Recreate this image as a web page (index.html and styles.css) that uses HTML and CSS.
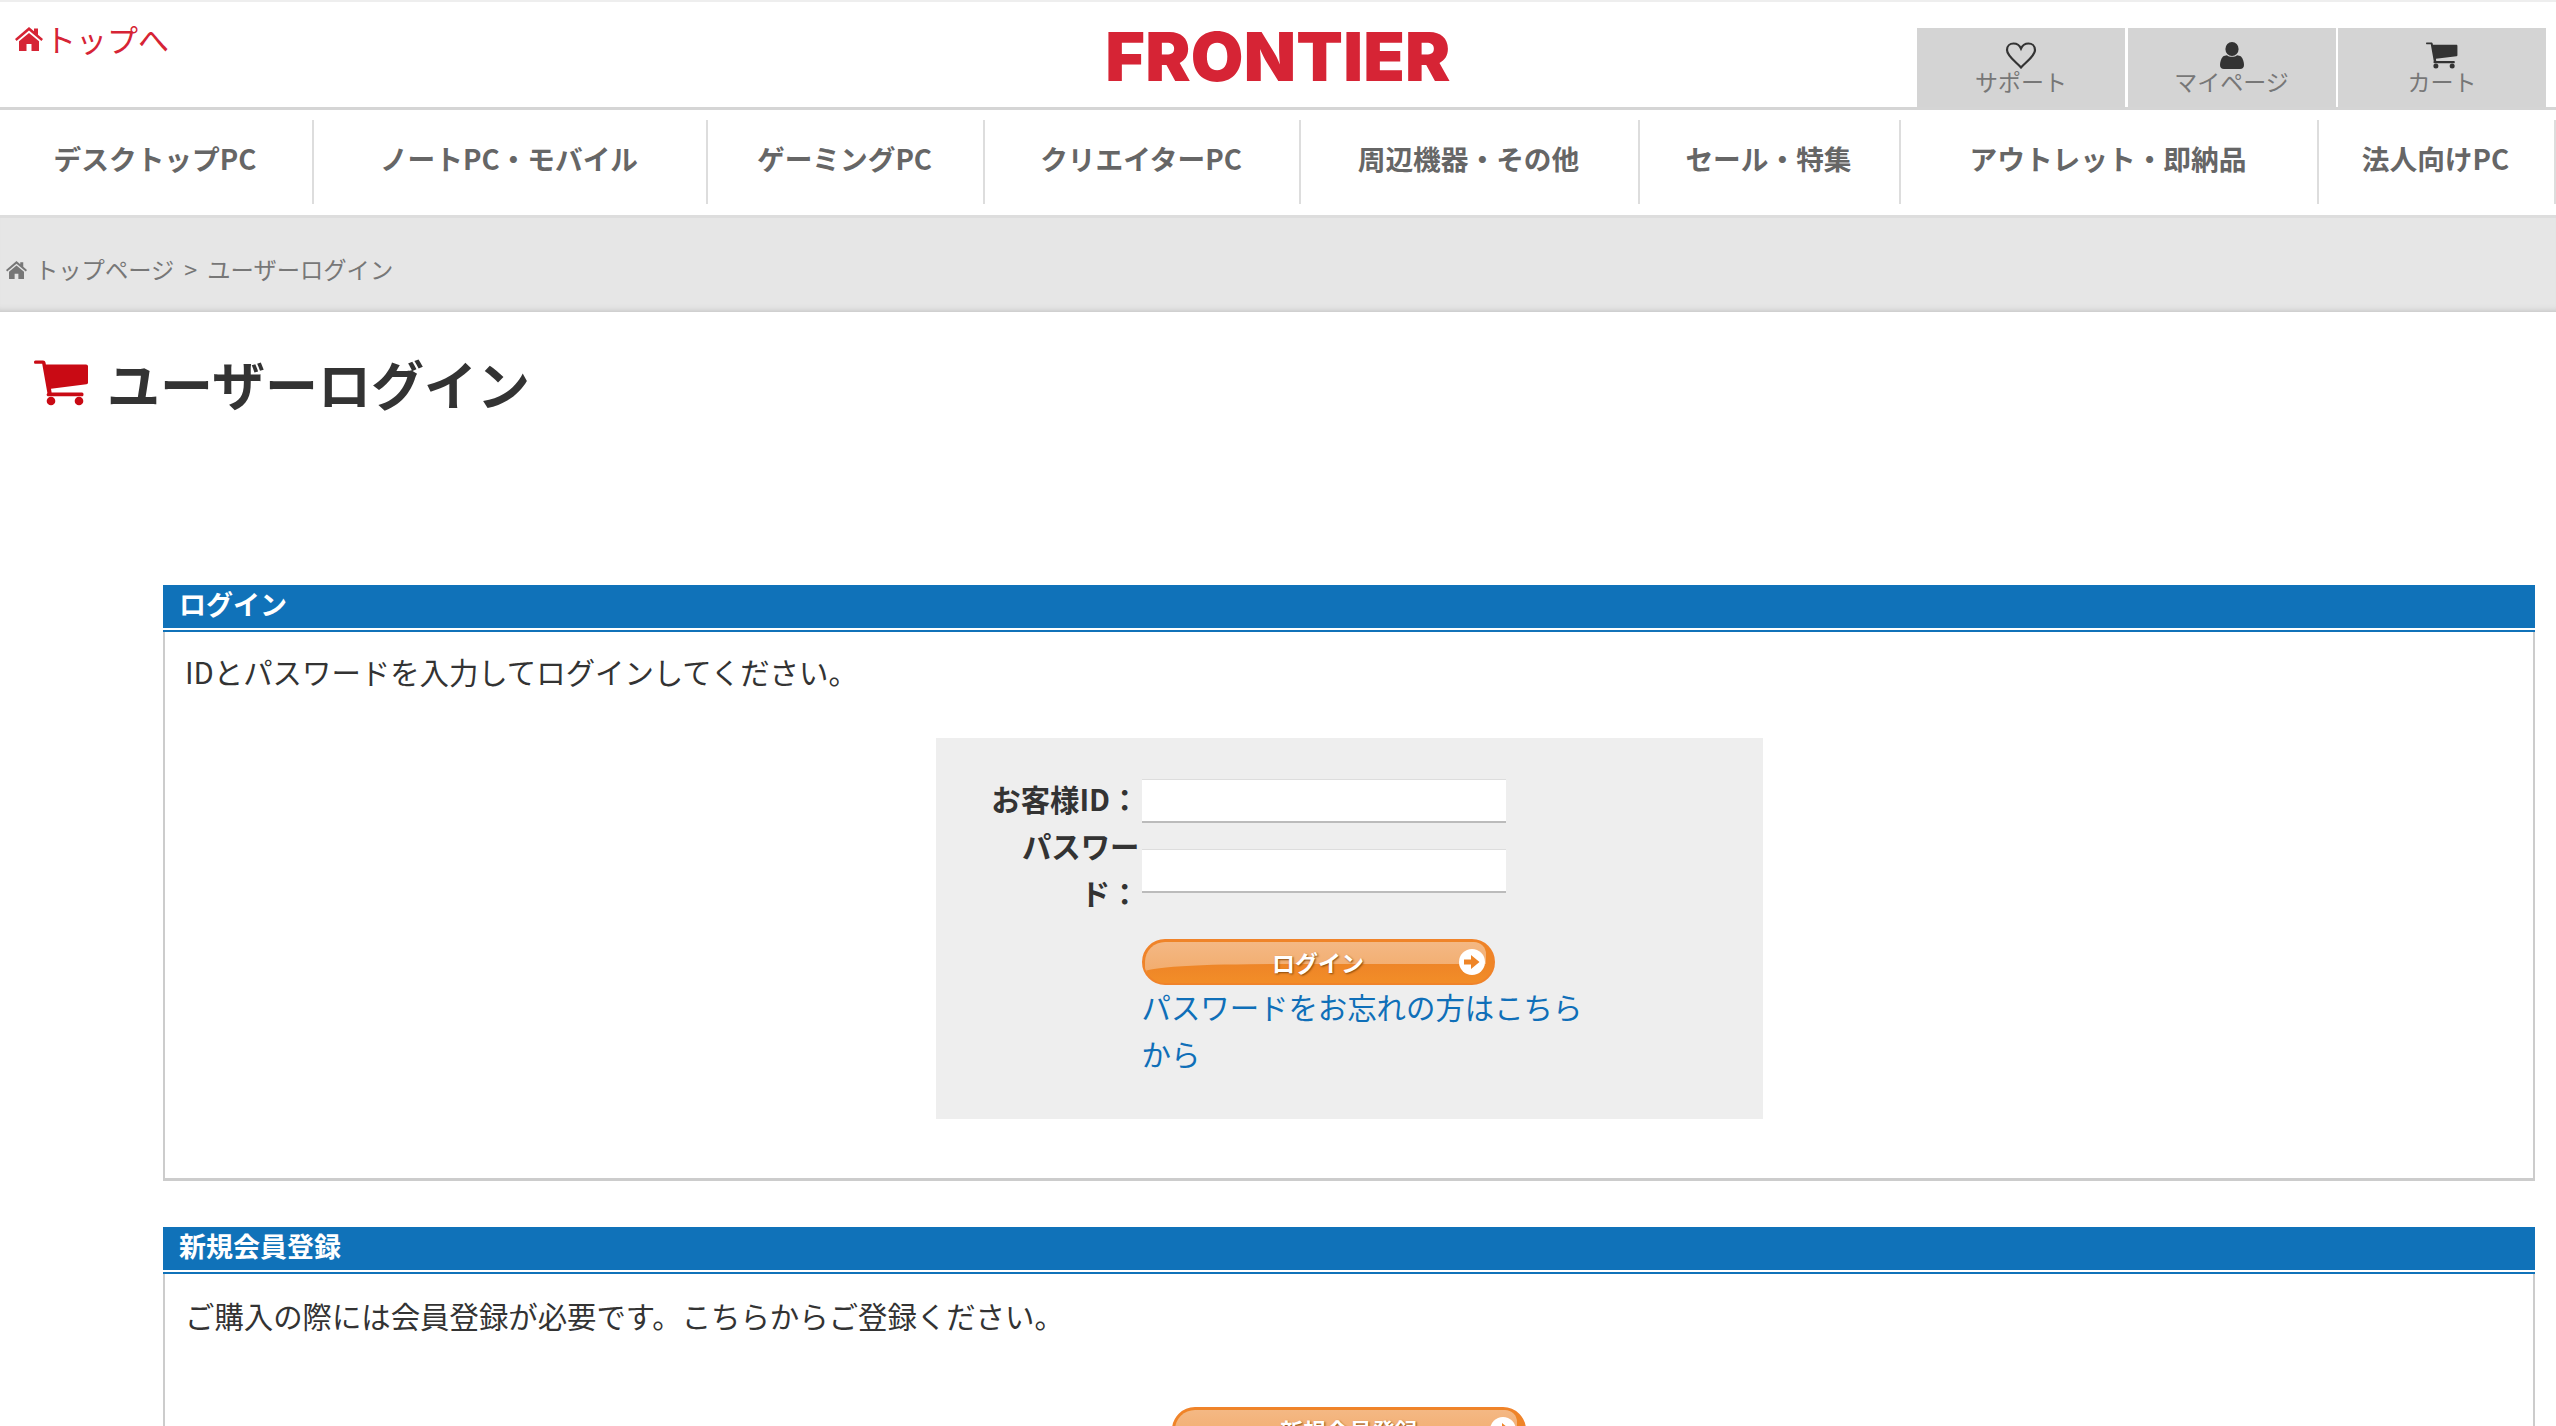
FILE: index.html
```html
<!DOCTYPE html>
<html lang="ja">
<head>
  <meta charset="UTF-8">
  <title>ユーザーログイン | FRONTIER</title>
  <link rel="stylesheet" href="styles.css">
</head>
<body>

  <svg class="sprites" aria-hidden="true">
    <symbol id="icon-home" viewBox="0 0 28 24">
      <path d="M14 0 L19 4.3 V1.5 H23 V7.7 L28 12 L26.4 14 L14 3.6 L1.6 14 L0 12 Z"/>
      <path d="M14 6 L24 14.2 V24 H16.5 V17 H11.5 V24 H4 V14.2 Z"/>
    </symbol>
    <symbol id="icon-cart" viewBox="0 0 55 46">
      <path d="M1.5 0.5 H9 C10.5 0.5 11.2 1.2 11.5 2.5 L11.9 4.4 H52 C53.2 4.4 54 5.2 54 6.4 V22.5 C54 23.5 53.4 24.1 52.4 24.2 L17 28.8 L17.6 32.6 H48 C50 32.6 50 36.2 48 36.2 H14.5 C12.6 36.2 12 34.6 13.4 33 L8.2 3.8 H1.5 C-0.5 3.8 -0.5 0.5 1.5 0.5 Z"/>
      <circle cx="17" cy="41" r="4.3"/>
      <circle cx="45" cy="41" r="4.3"/>
    </symbol>
  </svg>

  <header class="site-header">
    <a class="top-link" href="#">
      <svg class="top-link-icon"><use href="#icon-home"/></svg>トップへ
    </a>
    <a class="logo" href="#">FRONTIER</a>
    <ul class="util-menu">
      <li>
        <a href="#">
          <svg class="util-icon" viewBox="0 0 32 27">
            <path class="heart" d="M16 25.5 C11 20 2 14 2 8 C2 4 5 1.5 8.5 1.5 C12 1.5 14.7 3.5 16 6.5 C17.3 3.5 20 1.5 23.5 1.5 C27 1.5 30 4 30 8 C30 14 21 20 16 25.5 Z"/>
          </svg>
          サポート
        </a>
      </li>
      <li>
        <a href="#">
          <svg class="util-icon" viewBox="0 0 32 27">
            <ellipse cx="16" cy="7" rx="6.6" ry="7"/>
            <path d="M7 14.5 C8 13.5 9.5 13.5 11 13.2 C13 15.3 19 15.3 21 13.2 C22.5 13.5 24 13.5 25 14.5 C27 16.5 28 20 28 23 C28 25.5 26.5 27 24 27 H8 C5.5 27 4 25.5 4 23 C4 20 5 16.5 7 14.5 Z"/>
          </svg>
          マイページ
        </a>
      </li>
      <li>
        <a href="#">
          <svg class="util-icon" viewBox="0 0 55 46"><use href="#icon-cart"/></svg>
          カート
        </a>
      </li>
    </ul>
  </header>

  <nav class="global-nav">
    <a href="#">デスクトップPC</a>
    <a href="#">ノートPC・モバイル</a>
    <a href="#">ゲーミングPC</a>
    <a href="#">クリエイターPC</a>
    <a href="#">周辺機器・その他</a>
    <a href="#">セール・特集</a>
    <a href="#">アウトレット・即納品</a>
    <a href="#">法人向けPC</a>
  </nav>

  <div class="breadcrumb">
    <svg class="breadcrumb-icon"><use href="#icon-home"/></svg>
    <a href="#">トップページ</a>
    <span class="breadcrumb-sep">&gt;</span>
    <span>ユーザーログイン</span>
  </div>

  <main class="content">
    <h1 class="page-title">
      <svg class="page-title-icon"><use href="#icon-cart"/></svg>
      ユーザーログイン
    </h1>

    <section class="block login-block">
      <h2 class="block-title">ログイン</h2>
      <div class="block-body">
        <p class="block-text">IDとパスワードを入力してログインしてください。</p>
        <form class="login-form">
          <label class="login-label" for="user-id">お客様ID：</label>
          <input class="login-input" type="text" id="user-id">
          <label class="login-label" for="user-pass">パスワード：</label>
          <input class="login-input" type="password" id="user-pass">
          <a class="pill-button login-button" href="#">
            <span>ログイン</span>
            <svg class="pill-arrow" viewBox="0 0 26 26">
              <circle cx="13" cy="13" r="13" fill="#fff"/>
              <path d="M5 10.5 H12 V6 L20.5 13 L12 20 V15.5 H5 Z" fill="#ee8527"/>
            </svg>
          </a>
          <a class="login-forgot" href="#">パスワードをお忘れの方はこちらから</a>
        </form>
      </div>
    </section>

    <section class="block">
      <h2 class="block-title">新規会員登録</h2>
      <div class="block-body">
        <p class="block-text">ご購入の際には会員登録が必要です。こちらからご登録ください。</p>
        <a class="pill-button register-button" href="#">
          <span>新規会員登録</span>
          <svg class="pill-arrow" viewBox="0 0 26 26">
            <circle cx="13" cy="13" r="13" fill="#fff"/>
            <path d="M5 10.5 H12 V6 L20.5 13 L12 20 V15.5 H5 Z" fill="#ee8527"/>
          </svg>
        </a>
      </div>
    </section>
  </main>

</body>
</html>
```

FILE: styles.css
```css
:root {
  --red: #d62435;
  --blue: #1072b9;
  --link: #0f6fb8;
  --text-color: #333;
  --orange: #ee8527;
}

* {
  box-sizing: border-box;
}

html, body {
  height: 100%;
  overflow: hidden;
}

body {
  margin: 0;
  font-family: "Noto Sans CJK JP", "Noto Sans", sans-serif;
  font-size: 29.4px;
  line-height: 47px;
  color: var(--text-color);
  background: #fff;
}

a {
  text-decoration: none;
  color: inherit;
}

.sprites {
  display: none;
}

/* header */
.site-header {
  display: grid;
  grid-template-columns: 1fr auto 1fr;
  height: 110px;
  border-top: 2px solid #eee;
  border-bottom: 3px solid #d5d5d5;
}

.top-link {
  display: flex;
  align-items: center;
  align-self: start;
  margin: 13px 0 0 15px;
  font-size: 31px;
  line-height: 48px;
  color: var(--red);
}

.top-link-icon {
  width: 28px;
  height: 24px;
  margin-right: 2px;
  fill: var(--red);
}

.logo {
  align-self: start;
  margin-top: 18px;
  font-family: Inter, "Liberation Sans", sans-serif;
  font-size: 68px;
  font-weight: 900;
  line-height: 72px;
  letter-spacing: 0.2px;
  color: var(--red);
}

.util-menu {
  display: flex;
  justify-content: flex-end;
  gap: 2.5px;
  align-self: end;
  margin: 0;
  padding: 0 10px 0 0;
  list-style: none;
}

.util-menu a {
  display: flex;
  flex-direction: column;
  align-items: center;
  width: 208px;
  height: 79px;
  padding-top: 14px;
  font-size: 23px;
  line-height: 28px;
  color: #777;
  background: #d4d4d4;
}

.util-icon {
  flex: none;
  width: 32px;
  height: 27px;
  margin-bottom: -2px;
  fill: #333;
}

.heart {
  fill: none;
  stroke: #333;
  stroke-width: 2.2;
}

/* nav */
.global-nav {
  display: grid;
  grid-template-columns: 314px 394px 277px 316px 339px 261px 418px 237px;
  height: 105px;
  padding: 10px 0 11px;
}

.global-nav a {
  display: flex;
  align-items: center;
  justify-content: center;
  padding: 0 2px 7px 0;
  border-right: 2px solid #ddd;
  font-size: 27.7px;
  font-weight: 700;
  color: #666;
}

/* breadcrumb */
.breadcrumb {
  display: flex;
  align-items: center;
  height: 97px;
  padding: 9px 0 0 6px;
  border-top: 3px solid #ddd;
  font-size: 23.3px;
  color: #777;
  background: #e6e6e6;
  box-shadow: inset 0 -7px 7px -7px #b5b5b5;
}

.breadcrumb-icon {
  width: 21px;
  height: 18px;
  margin-right: 8px;
  fill: #777;
}

.breadcrumb-sep {
  margin: 0 10px;
}

/* main */
.content {
  padding: 0 21px 0 163px;
}

.page-title {
  display: flex;
  align-items: center;
  margin: 41px 0 172px -163px;
  padding-left: 34px;
  font-size: 53px;
  font-weight: 700;
  line-height: 60px;
  color: var(--text-color);
}

.page-title-icon {
  width: 55px;
  height: 46px;
  margin-right: 18px;
  fill: #c90a14;
}

.block {
  margin-bottom: 46px;
}

.block-title {
  height: 47px;
  margin: 0;
  padding-left: 16px;
  border-bottom: 6px double var(--blue);
  font-size: 27px;
  font-weight: 700;
  line-height: 37px;
  color: #fff;
  background: var(--blue);
  background-clip: padding-box;
}

.block-body {
  padding: 18px 20px 59px;
  border-left: 2px solid #ccc;
  border-right: 2px solid #ccc;
  border-bottom: 3px solid #ccc;
}

.block-text {
  margin: 0;
}

.login-block .block-text {
  margin-top: -2px;
}

/* login form */
.login-form {
  display: grid;
  grid-template-columns: 150px 454px;
  column-gap: 2px;
  align-items: center;
  width: 827px;
  margin: 43px auto 0;
  padding: 39px 0 40px 54px;
  background: #eee;
}

.login-label {
  margin: -2px 0 2px;
  font-weight: 700;
  text-align: right;
}

.login-input {
  width: 364px;
  height: 44px;
  padding: 0 8px;
  border: 0;
  border-top: 1px solid #ddd;
  border-bottom: 2px solid #bbb;
  background: #fff;
}

.login-forgot {
  grid-column: 2;
  margin: -2px 0 2px;
  color: var(--link);
}

/* orange pill button */
.pill-button {
  position: relative;
  display: flex;
  align-items: center;
  justify-content: center;
  height: 46px;
  border: 2px solid #f0832a;
  border-radius: 23px;
  font-size: 23px;
  font-weight: 700;
  line-height: 40px;
  color: #fff;
  text-shadow: 1px 1px 2px #8a4a0c;
  background: #ee8527;
  overflow: hidden;
}

/* gloss on the top half */
.pill-button::before {
  content: "";
  position: absolute;
  top: 1px;
  left: 1px;
  right: 7px;
  height: 30px;
  border-radius: 20px 12px 0 0;
  background: linear-gradient(#f4b884, #f2ac6d);
}

/* darker lower half, curved up from the left end */
.pill-button::after {
  content: "";
  position: absolute;
  top: 23px;
  left: 0;
  right: 0;
  bottom: 0;
  border-radius: 130px 0 0 0 / 8px 0 0 0;
  background: linear-gradient(#ee8527, #f28d28);
}

.pill-button span {
  position: relative;
  z-index: 1;
}

.pill-arrow {
  position: absolute;
  z-index: 1;
  top: 8px;
  right: 8px;
  width: 26px;
  height: 26px;
}

.login-button {
  grid-column: 2;
  width: 353px;
  margin-top: 21px;
}

.register-button {
  width: 354px;
  margin: 68px auto 0;
}
```
